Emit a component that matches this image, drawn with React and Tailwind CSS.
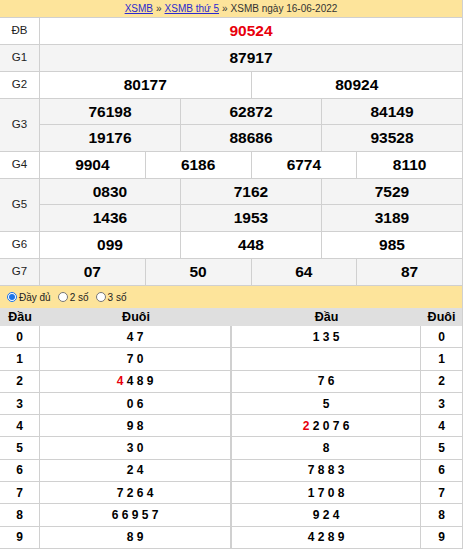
import React from 'react';

const prizes = [
  { label: 'ĐB', rows: [['90524']], red: true },
  { label: 'G1', rows: [['87917']], gray: true },
  { label: 'G2', rows: [['80177', '80924']] },
  { label: 'G3', rows: [['76198', '62872', '84149'], ['19176', '88686', '93528']], gray: true },
  { label: 'G4', rows: [['9904', '6186', '6774', '8110']] },
  { label: 'G5', rows: [['0830', '7162', '7529'], ['1436', '1953', '3189']], gray: true },
  { label: 'G6', rows: [['099', '448', '985']] },
  { label: 'G7', rows: [['07', '50', '64', '87']], gray: true },
];

// left: duoi of dau i ; right: dau list with duoi i
const loto = [
  { left: '4 7', right: '1 3 5' },
  { left: '7 0', right: '' },
  { left: '4 8 9', leftRed: '4', right: '7 6' },
  { left: '0 6', right: '5' },
  { left: '9 8', right: '2 0 7 6', rightRed: '2' },
  { left: '3 0', right: '8' },
  { left: '2 4', right: '7 8 8 3' },
  { left: '7 2 6 4', right: '1 7 0 8' },
  { left: '6 6 9 5 7', right: '9 2 4' },
  { left: '8 9', right: '4 2 8 9' },
];

function Radio({ checked, label }) {
  return (
    <label className="flex items-center gap-[2px] mr-[7px]">
      {checked ? (
        <span className="w-[10px] h-[10px] rounded-full border border-[#1a73e8] bg-white flex items-center justify-center">
          <span className="w-[6px] h-[6px] rounded-full bg-[#1a73e8]" />
        </span>
      ) : (
        <span className="w-[10px] h-[10px] rounded-full border border-[#767676] bg-white" />
      )}
      <span className="text-[10px] text-[#222]">{label}</span>
    </label>
  );
}

export default function App() {
  return (
    <div className="w-[463px] bg-white border-r border-[#d0d0d0] text-black" style={{ fontFamily: '"Liberation Sans", Arial, sans-serif' }}>
      {/* breadcrumb */}
      <div className="h-[18px] bg-[#fde49b] border-b border-[#d0d0d0] flex items-center justify-center text-[10px] text-[#333]">
        <a href="#" className="text-[#2a2ad0] underline">XSMB</a>
        <span className="mx-[3px]">»</span>
        <a href="#" className="text-[#2a2ad0] underline">XSMB thứ 5</a>
        <span className="mx-[3px]">»</span>
        <span>XSMB ngày 16-06-2022</span>
      </div>

      {/* prize table */}
      {prizes.map((p) => (
        <div key={p.label} className={`flex border-b border-[#d0d0d0] ${p.gray ? 'bg-[#f4f4f4]' : 'bg-white'}`}>
          <div className="w-[40px] shrink-0 border-r border-[#d0d0d0] flex items-center justify-center text-[11.5px] text-[#222]">
            {p.label}
          </div>
          <div className="flex-1 flex flex-col divide-y divide-[#d0d0d0]">
            {p.rows.map((r, i) => (
              <div key={i} className="h-[26px] flex divide-x divide-[#d0d0d0]">
                {r.map((n, j) => (
                  <div
                    key={j}
                    className={`flex-1 basis-0 flex items-center justify-center text-[15.5px] font-bold ${p.red ? 'text-[#e8000c]' : 'text-black'}`}
                  >
                    {n}
                  </div>
                ))}
              </div>
            ))}
          </div>
        </div>
      ))}

      {/* options */}
      <div className="h-[22px] bg-[#fde49b] flex items-center pl-[7px]">
        <Radio checked label="Đầy đủ" />
        <Radio label="2 số" />
        <Radio label="3 số" />
      </div>

      {/* loto table */}
      <div className="h-[18px] bg-[#dfdfdf] flex items-center text-[12.5px] font-bold">
        <div className="w-[40px] text-center">Đầu</div>
        <div className="w-[192px] text-center">Đuôi</div>
        <div className="flex-1 text-center">Đầu</div>
        <div className="w-[41px] text-center">Đuôi</div>
      </div>
      {loto.map((r, i) => (
        <div key={i} className="h-[22.3px] flex border-b border-[#d0d0d0] text-[12px] font-bold">
          <div className="w-[40px] border-r border-[#d0d0d0] flex items-center justify-center">{i}</div>
          <div className="w-[192px] border-r-2 border-[#d0d0d0] flex items-center justify-center whitespace-pre">
            {r.leftRed && <span className="text-[#e8000c]">{r.leftRed} </span>}
            {r.left}
          </div>
          <div className="flex-1 border-r border-[#d0d0d0] flex items-center justify-center whitespace-pre">
            {r.rightRed && <span className="text-[#e8000c]">{r.rightRed} </span>}
            {r.right}
          </div>
          <div className="w-[41px] flex items-center justify-center">{i}</div>
        </div>
      ))}
    </div>
  );
}
